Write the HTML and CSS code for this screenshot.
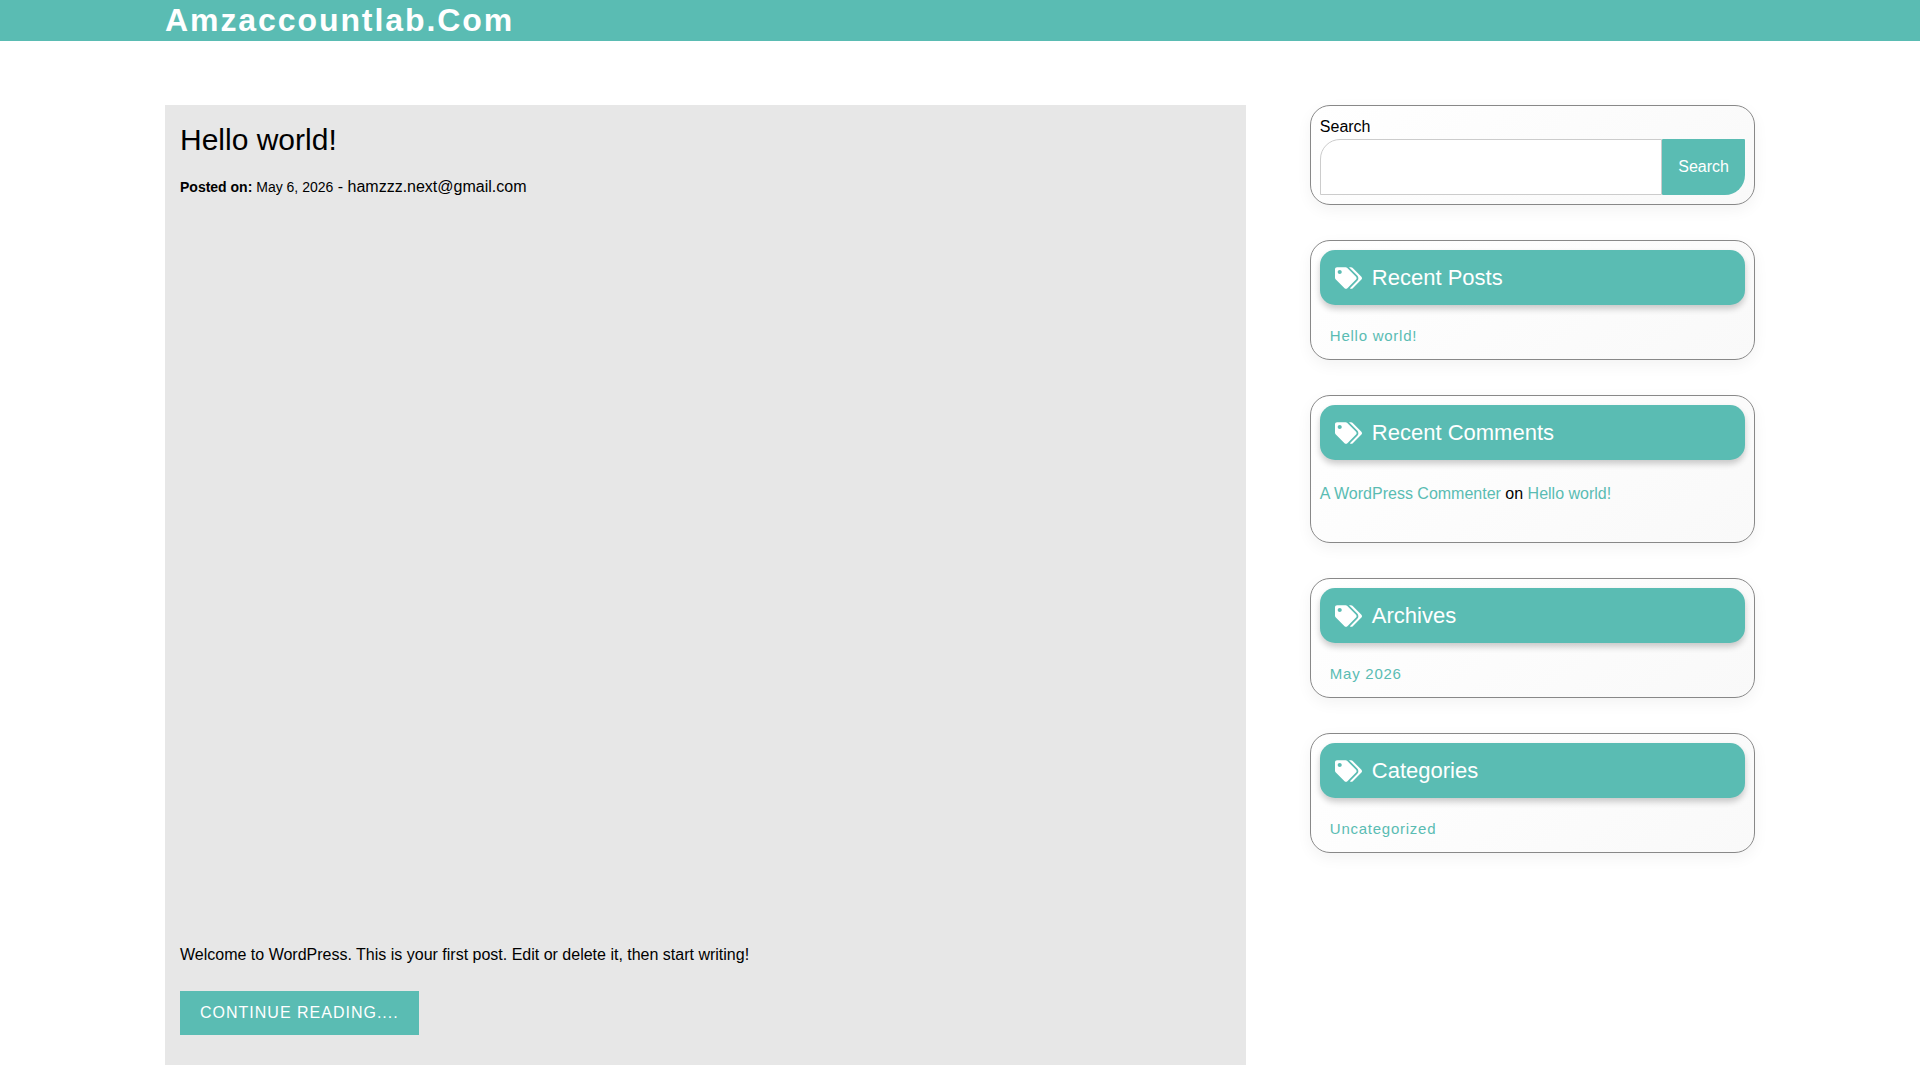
FILE: index.html
```
<!DOCTYPE html>
<html lang="en">
<head>
  <meta charset="UTF-8">
  <meta name="viewport" content="width=device-width, initial-scale=1">
  <title>Amzaccountlab.Com</title>
  <link rel="stylesheet" href="styles.css">
</head>
<body>
  <svg width="0" height="0" class="sprite" aria-hidden="true">
    <symbol id="tags" viewBox="0 0 640 512">
      <path d="M497.941 225.941L286.059 14.059A48 48 0 0 0 252.118 0H48C21.49 0 0 21.49 0 48v204.118a48 48 0 0 0 14.059 33.941l211.882 211.882c18.744 18.745 49.136 18.746 67.882 0l204.118-204.118c18.745-18.745 18.745-49.137 0-67.882zM112 160c-26.51 0-48-21.49-48-48s21.49-48 48-48 48 21.49 48 48-21.49 48-48 48zm513.941 133.823L421.823 497.941c-18.745 18.745-49.137 18.745-67.882 0l-.36-.36L527.64 323.522c16.999-16.999 26.362-39.6 26.362-63.64s-9.362-46.641-26.362-63.64L331.397 0h48.721a48 48 0 0 1 33.941 14.059l211.882 211.882c18.745 18.745 18.745 49.137 0 67.882z"/>
    </symbol>
  </svg>

  <header class="site-header">
    <div class="container">
      <h1 class="site-title"><a href="#">Amzaccountlab.Com</a></h1>
    </div>
  </header>

  <div class="container content">
    <main class="posts">
      <article class="post">
        <h2 class="post-title"><a href="#">Hello world!</a></h2>
        <p class="post-meta"><small><b>Posted on:</b> May 6, 2026</small> - <a href="#">hamzzz.next@gmail.com</a></p>
        <div class="post-thumbnail"></div>
        <p class="post-excerpt">Welcome to WordPress. This is your first post. Edit or delete it, then start writing!</p>
        <a href="#" class="read-more">Continue Reading....</a>
      </article>
    </main>

    <aside class="sidebar">
      <section class="widget">
        <form class="search-form" role="search">
          <label for="search">Search</label>
          <div class="search-row">
            <input type="search" id="search" name="s">
            <button type="submit">Search</button>
          </div>
        </form>
      </section>

      <section class="widget">
        <h2 class="widget-title"><svg class="icon"><use href="#tags"/></svg>Recent Posts</h2>
        <ul class="widget-list">
          <li><a href="#">Hello world!</a></li>
        </ul>
      </section>

      <section class="widget">
        <h2 class="widget-title"><svg class="icon"><use href="#tags"/></svg>Recent Comments</h2>
        <p class="comment"><a href="#">A WordPress Commenter</a> on <a href="#">Hello world!</a></p>
      </section>

      <section class="widget">
        <h2 class="widget-title"><svg class="icon"><use href="#tags"/></svg>Archives</h2>
        <ul class="widget-list">
          <li><a href="#">May 2026</a></li>
        </ul>
      </section>

      <section class="widget">
        <h2 class="widget-title"><svg class="icon"><use href="#tags"/></svg>Categories</h2>
        <ul class="widget-list">
          <li><a href="#">Uncategorized</a></li>
        </ul>
      </section>
    </aside>
  </div>
</body>
</html>
```
FILE: styles.css
```
* {
  box-sizing: border-box;
  margin: 0;
  padding: 0;
}

body {
  font-family: "Liberation Sans", Arial, sans-serif;
  font-size: 16px;
  line-height: 24px;
  color: #000;
  background-color: #fff;
}

a {
  color: #5abcb3;
  text-decoration: none;
}

.sprite {
  display: none;
}

.container {
  width: 90%;
  max-width: 1590px;
  margin: 0 auto;
}

/* Header */
.site-header {
  background-color: #5abcb3;
  padding-bottom: 1px;
}

.site-title {
  font-size: 32px;
  line-height: 40px;
  letter-spacing: 0.06em;
}

.site-title a {
  color: #fff;
}

/* Layout */
.content {
  display: flex;
  justify-content: space-between;
  align-items: flex-start;
  padding: 64px 0 15px;
}

.posts {
  width: 68%;
}

.sidebar {
  width: 28%;
  display: flex;
  flex-direction: column;
  gap: 35px;
}

/* Post */
.post {
  background-color: #e7e7e7;
  padding: 15px 15px 30px;
}

.post-title {
  font-size: 30px;
  font-weight: normal;
  line-height: 40px;
  margin-bottom: 15px;
}

.post-title a,
.post-meta a {
  color: #000;
}

.post-meta small {
  font-size: 14px;
}

.post-thumbnail {
  min-height: 696px;
  margin: 24px 0;
}

.post-excerpt {
  margin-bottom: 24px;
}

.read-more {
  display: inline-block;
  padding: 10px 20px;
  background-color: #5abcb3;
  color: #fff;
  letter-spacing: 1px;
  text-transform: uppercase;
}

/* Sidebar widgets */
.widget {
  padding: 9px;
  border: 1px solid #888;
  border-radius: 20px;
  background: linear-gradient(145deg, #fff, #f9f9f9);
  box-shadow: 0 5px 15px rgba(0, 0, 0, 0.05);
}

.widget-title {
  display: flex;
  align-items: center;
  gap: 10px;
  padding: 13px 15px 12px;
  border-radius: 15px;
  background-color: #5abcb3;
  box-shadow: 0 4px 6px rgba(0, 0, 0, 0.2);
  color: #fff;
  font-size: 22px;
  font-weight: normal;
  line-height: 30px;
}

.icon {
  width: 27px;
  height: 22px;
  fill: currentColor;
}

.widget-list {
  list-style: none;
  padding: 19px 10px 2px;
  font-size: 15px;
  letter-spacing: 0.05em;
}

.comment {
  padding: 22px 0 27px;
}

/* Search */
.search-form label {
  display: block;
}

.search-row {
  display: flex;
}

.search-row input {
  flex: 1;
  min-width: 0;
  height: 56px;
  padding: 0 15px;
  border: 1px solid #ccc;
  border-radius: 20px 0 0 0;
  background-color: #fff;
  font: inherit;
}

.search-row button {
  padding: 0 16px;
  border: none;
  border-radius: 1px 1px 20px 1px;
  background-color: #5abcb3;
  color: #fff;
  font: inherit;
  cursor: pointer;
}

@media (max-width: 800px) {
  .content {
    flex-direction: column;
    gap: 35px;
  }

  .posts,
  .sidebar {
    width: 100%;
  }
}
```
